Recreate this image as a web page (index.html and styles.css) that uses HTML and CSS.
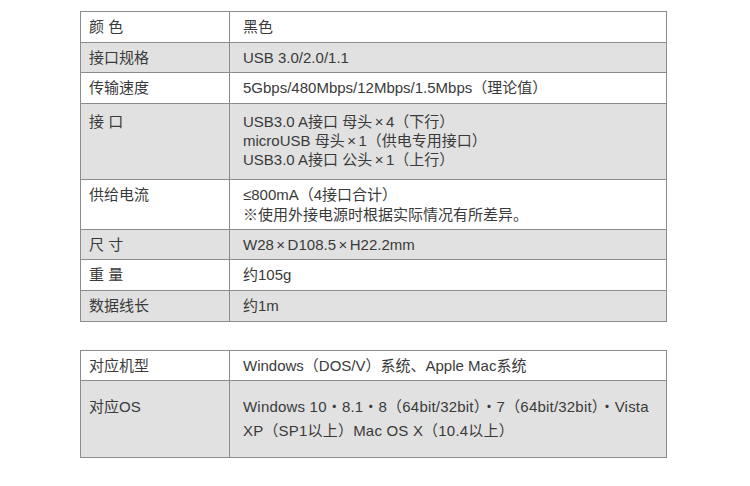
FILE: index.html
```html
<!DOCTYPE html>
<html lang="zh-CN">
<head>
<meta charset="utf-8">
<title>规格</title>
<link rel="stylesheet" href="styles.css">
</head>
<body>
<div class="page">
  <table class="spec">
    <tr class="odd"><th>颜 色</th><td>黑色</td></tr>
    <tr class="even short"><th>接口规格</th><td>USB 3.0/2.0/1.1</td></tr>
    <tr class="odd"><th>传输速度</th><td>5Gbps/480Mbps/12Mbps/1.5Mbps（理论值）</td></tr>
    <tr class="even multi3"><th>接 口</th><td>USB3.0 A接口 母头<span class="x">×</span>4（下行）<br>microUSB 母头<span class="x">×</span>1（供电专用接口）<br>USB3.0 A接口 公头<span class="x">×</span>1（上行）</td></tr>
    <tr class="odd multi2"><th>供给电流</th><td>≤800mA（4接口合计）<br>※使用外接电源时根据实际情况有所差异。</td></tr>
    <tr class="even short"><th>尺 寸</th><td>W28<span class="x">×</span>D108.5<span class="x">×</span>H22.2mm</td></tr>
    <tr class="odd"><th>重 量</th><td>约105g</td></tr>
    <tr class="even"><th>数据线长</th><td>约1m</td></tr>
  </table>
  <table class="spec second">
    <tr class="odd short"><th>对应机型</th><td>Windows（DOS/V）系统、Apple Mac系统</td></tr>
    <tr class="even os"><th>对应OS</th><td class="wide">Windows 10・8.1・8（64bit/32bit）・7（64bit/32bit）・Vista<br>XP（SP1以上）Mac OS X（10.4以上）</td></tr>
  </table>
</div>
</body>
</html>
```
FILE: styles.css
```css
html, body {
  margin: 0;
  padding: 0;
  background: #ffffff;
}
.page {
  padding: 11px 0 0 80px;
  font-family: "Liberation Sans", "Noto Sans CJK SC", sans-serif;
  font-size: 15px;
  color: #3a3a3a;
}
.spec {
  width: 587px;
  border-collapse: collapse;
  table-layout: fixed;
}
.spec.second {
  margin-top: 28px;
}
.spec th, .spec td {
  border: 1px solid #8c8c8c;
  text-align: left;
  font-weight: normal;
  vertical-align: top;
  line-height: 20px;
  padding: 5px 12px 5px;
}
.spec .short th, .spec .short td {
  padding-bottom: 4px;
}
.spec th {
  width: 132px;
  padding-left: 8px;
  padding-right: 8px;
}
.spec td {
  padding-left: 13px;
}
.spec .even th, .spec .even td {
  background: #e1e1e1;
}
.spec .multi3 th, .spec .multi3 td {
  padding-top: 8px;
  padding-bottom: 10px;
  line-height: 19px;
}
.spec .multi2 th, .spec .multi2 td {
  padding-bottom: 4px;
}
.spec .os th, .spec .os td {
  padding-top: 14px;
  padding-bottom: 14px;
  line-height: 24px;
}
.x {
  padding: 0 2.5px;
}
.spec td.wide {
  letter-spacing: 0.2px;
}
```
